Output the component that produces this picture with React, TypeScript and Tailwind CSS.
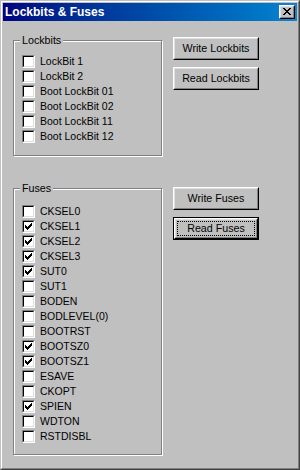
import React from "react";

const checkPath = [
  [6, 0, 1], [5, 1, 2], [0, 2, 1], [4, 2, 3], [0, 3, 2], [3, 3, 3], [0, 4, 5], [1, 5, 3], [2, 6, 1],
]
  .map(([x, y, w]) => `M${x + 1} ${y + 1}h${w}v1h-${w}z`)
  .join("");

const closePath = [
  [0, 0, 2], [6, 0, 2], [1, 1, 2], [5, 1, 2], [2, 2, 4], [3, 3, 2], [2, 4, 4], [1, 5, 2], [5, 5, 2], [0, 6, 2], [6, 6, 2],
]
  .map(([x, y, w]) => `M${x} ${y}h${w}v1h-${w}z`)
  .join("");

function CheckBox({ label, checked }: { label: string; checked?: boolean }) {
  return (
    <div className="flex h-[15px] items-center gap-[5px]">
      <span className="block h-[13px] w-[13px] shrink-0 border border-t-[#808080] border-l-[#808080] border-r-white border-b-white">
        <span className="block h-[11px] w-[11px] border border-t-black border-l-black border-r-[#dfdfdf] border-b-[#dfdfdf] bg-white">
          {checked && (
            <svg width="9" height="9" viewBox="0 0 9 9" shapeRendering="crispEdges" className="block">
              <path d={checkPath} fill="#000" />
            </svg>
          )}
        </span>
      </span>
      <span className="text-[10.5px] leading-[13px] text-black whitespace-nowrap">{label}</span>
    </div>
  );
}

function Button({ label, def }: { label: string; def?: boolean }) {
  const core = (
    <div className="h-full w-full border border-t-white border-l-white border-r-black border-b-black">
      <div className="flex h-full w-full items-center justify-center border border-t-[#dfdfdf] border-l-[#dfdfdf] border-r-[#808080] border-b-[#808080] bg-[#c0c0c0]">
        {def ? (
          <div className="m-[1px] flex h-[calc(100%-2px)] w-[calc(100%-2px)] items-center justify-center border border-dotted border-black">
            <span className="text-[10.7px] leading-[13px] text-black">{label}</span>
          </div>
        ) : (
          <span className="text-[10.7px] leading-[13px] text-black">{label}</span>
        )}
      </div>
    </div>
  );
  return def ? (
    <div className="h-[23px] w-[86px] border border-black">{core}</div>
  ) : (
    <div className="h-[23px] w-[86px]">{core}</div>
  );
}

function Group({
  title,
  children,
  className,
}: {
  title: string;
  children: React.ReactNode;
  className: string;
}) {
  return (
    <div
      className={`relative w-[149px] shrink-0 border border-[#808080] shadow-[inset_1px_1px_0_#fff,1px_1px_0_#fff] pl-[8px] ${className}`}
    >
      <span className="absolute left-[6px] top-[-7px] bg-[#c0c0c0] px-[2px] text-[10.7px] leading-[13px] text-black">
        {title}
      </span>
      {children}
    </div>
  );
}

export default function App() {
  const lockbits = ["LockBit 1", "LockBit 2", "Boot LockBit 01", "Boot LockBit 02", "Boot LockBit 11", "Boot LockBit 12"];
  const fuses: [string, boolean][] = [
    ["CKSEL0", false],
    ["CKSEL1", true],
    ["CKSEL2", true],
    ["CKSEL3", true],
    ["SUT0", true],
    ["SUT1", false],
    ["BODEN", false],
    ["BODLEVEL(0)", false],
    ["BOOTRST", false],
    ["BOOTSZ0", true],
    ["BOOTSZ1", true],
    ["ESAVE", false],
    ["CKOPT", false],
    ["SPIEN", true],
    ["WDTON", false],
    ["RSTDISBL", false],
  ];
  return (
    <div className="h-[470px] w-[300px] border border-t-[#c0c0c0] border-l-[#c0c0c0] border-r-[#404040] border-b-[#404040] font-['Liberation_Sans',Arial,sans-serif]">
      <div className="flex h-full w-full flex-col border border-t-white border-l-white border-r-[#808080] border-b-[#808080] bg-[#c0c0c0] p-[1px]">
        <div className="flex h-[18px] shrink-0 items-center justify-between bg-linear-to-r from-[#000080] to-[#1084d0] pl-[2px]">
          <span className="text-[12px] font-bold leading-[14px] text-white">Lockbits &amp; Fuses</span>
          <div className="mr-[2px] h-[14px] w-[16px] border border-t-white border-l-white border-r-black border-b-black">
            <div className="flex h-full w-full items-center justify-center border border-t-[#dfdfdf] border-l-[#dfdfdf] border-r-[#808080] border-b-[#808080] bg-[#c0c0c0] pb-[1px]">
              <svg width="8" height="7" viewBox="0 0 8 7" shapeRendering="crispEdges" className="block">
                <path d={closePath} fill="#000" />
              </svg>
            </div>
          </div>
        </div>
        <div className="flex flex-col pl-[10px] pt-[16px]">
          <div className="flex items-start">
            <Group title="Lockbits" className="mt-[3px] pt-[13px] pb-[11px]">
              {lockbits.map((l) => (
                <CheckBox key={l} label={l} />
              ))}
            </Group>
            <div className="ml-[11px] flex flex-col gap-[7px]">
              <Button label="Write Lockbits" />
              <Button label="Read Lockbits" />
            </div>
          </div>
          <div className="mt-[31px] flex items-start">
            <Group title="Fuses" className="mt-[1px] pt-[15px] pb-[10px]">
              {fuses.map(([l, c]) => (
                <CheckBox key={l} label={l} checked={c} />
              ))}
            </Group>
            <div className="ml-[11px] flex flex-col gap-[7px]">
              <Button label="Write Fuses" />
              <Button label="Read Fuses" def />
            </div>
          </div>
        </div>
      </div>
    </div>
  );
}
